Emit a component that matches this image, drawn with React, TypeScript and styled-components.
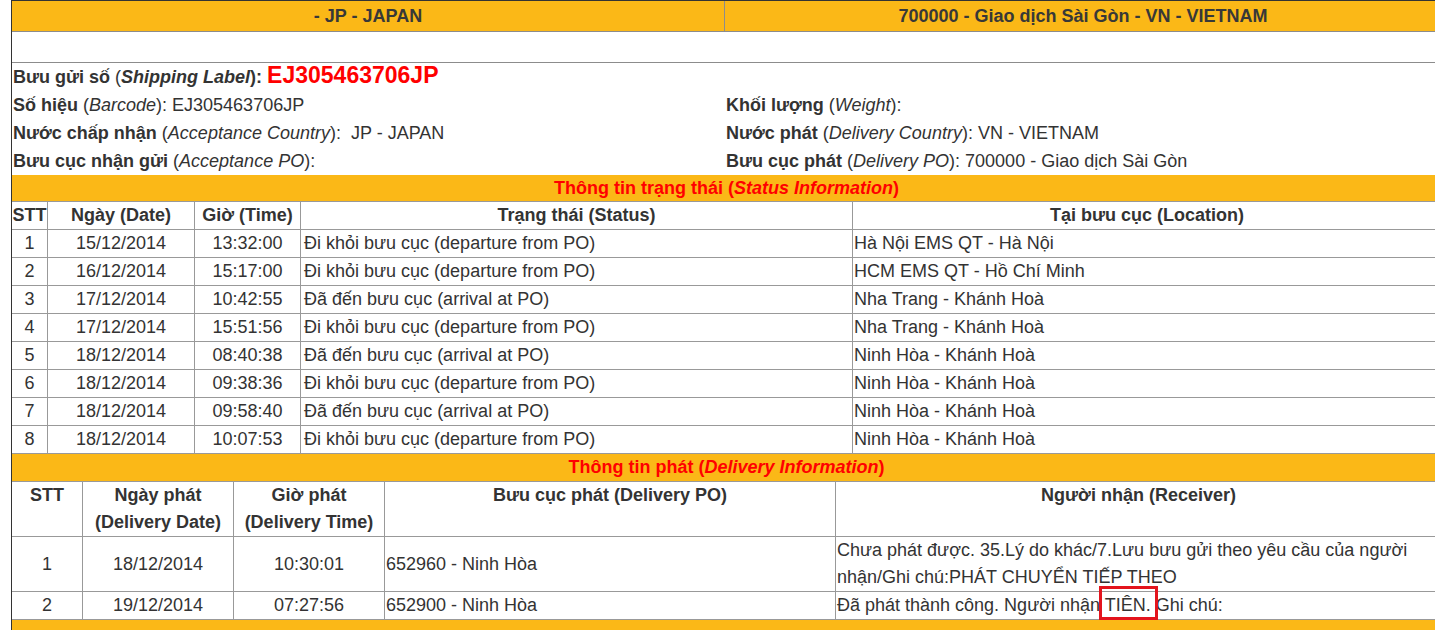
import React from "react";
import styled, { createGlobalStyle } from "styled-components";

const ORANGE = "#fbb817";
const LINE = "#8c8c8c";

const GlobalStyle = createGlobalStyle`
  html, body {
    margin: 0;
    padding: 0;
    background: #fff;
    overflow: hidden;
  }
  body {
    font-family: "Liberation Sans", Arial, sans-serif;
    font-size: 18px;
    color: #333;
  }
`;

const Page = styled.div`
  box-sizing: border-box;
  margin-left: 11px;
  width: 1430px;
  border-left: 1px solid #333;
  border-top: 1px solid #333;
`;

const TopHeader = styled.div`
  display: grid;
  grid-template-columns: 713px 1fr;
  background: ${ORANGE};
  border-bottom: 1px solid ${LINE};
  font-weight: bold;
  line-height: 30px;
  text-align: center;
  color: #383838;
`;

const HeaderCell = styled.div<{ $divider?: boolean }>`
  border-right: ${(p) => (p.$divider ? `1px solid ${LINE}` : "none")};
`;

const EmptyRow = styled.div`
  height: 30px;
  border-bottom: 1px solid ${LINE};
`;

const InfoGrid = styled.div`
  display: grid;
  grid-template-columns: 713px 1fr;
  grid-auto-rows: 28px;
  line-height: 28px;
`;

const InfoCell = styled.div`
  padding-left: 1px;
  white-space: nowrap;
`;

const LabelCode = styled.span`
  color: #f00;
  font-size: 23px;
  font-weight: bold;
  line-height: 20px;
`;

const Band = styled.div<{ $h?: number }>`
  background: ${ORANGE};
  color: #f00;
  font-weight: bold;
  text-align: center;
  line-height: ${(p) => p.$h ?? 26}px;
  border-bottom: 1px solid #999;
`;

const Row = styled.div<{ $cols: string }>`
  display: grid;
  grid-template-columns: ${(p) => p.$cols};
  border-bottom: 1px solid #999;
  line-height: 27px;
`;

const Cell = styled.div<{ $align?: "left" | "center"; $top?: boolean; $last?: boolean; $pad?: number }>`
  display: flex;
  flex-direction: column;
  justify-content: ${(p) => (p.$top ? "flex-start" : "center")};
  text-align: ${(p) => p.$align ?? "center"};
  padding: 0 ${(p) => p.$pad ?? 0}px;
  border-right: ${(p) => (p.$last ? "none" : "1px solid #999")};
  white-space: ${(p) => (p.$align === "left" ? "normal" : "nowrap")};
`;

const HeadCell = styled(Cell)`
  font-weight: bold;
`;

const Marked = styled.span`
  position: relative;
  &::after {
    content: "";
    position: absolute;
    left: -6px;
    right: -7px;
    top: -9px;
    bottom: -5px;
    border: 3px solid #e3141d;
  }
`;

const STATUS_COLS = "36px 147px 106px 552px 1fr";
const DELIVERY_COLS = "71px 151px 151px 451px 1fr";

const DEPART = "Đi khỏi bưu cục (departure from PO)";
const ARRIVE = "Đã đến bưu cục (arrival at PO)";
const NINH = "Ninh Hòa - Khánh Hoà";
const NHA = "Nha Trang - Khánh Hoà";

const statusRows = [
  ["1", "15/12/2014", "13:32:00", DEPART, "Hà Nội EMS QT - Hà Nội"],
  ["2", "16/12/2014", "15:17:00", DEPART, "HCM EMS QT - Hồ Chí Minh"],
  ["3", "17/12/2014", "10:42:55", ARRIVE, NHA],
  ["4", "17/12/2014", "15:51:56", DEPART, NHA],
  ["5", "18/12/2014", "08:40:38", ARRIVE, NINH],
  ["6", "18/12/2014", "09:38:36", DEPART, NINH],
  ["7", "18/12/2014", "09:58:40", ARRIVE, NINH],
  ["8", "18/12/2014", "10:07:53", DEPART, NINH],
];

export default function App() {
  return (
    <>
      <GlobalStyle />
      <Page>
        <TopHeader>
          <HeaderCell $divider>- JP - JAPAN</HeaderCell>
          <HeaderCell>700000 - Giao dịch Sài Gòn - VN - VIETNAM</HeaderCell>
        </TopHeader>
        <EmptyRow />

        <InfoGrid>
          <InfoCell>
            <b>Bưu gửi số</b> (<b><i>Shipping Label</i>): </b>
            <LabelCode>EJ305463706JP</LabelCode>
          </InfoCell>
          <InfoCell />
          <InfoCell>
            <b>Số hiệu</b> (<i>Barcode</i>): EJ305463706JP
          </InfoCell>
          <InfoCell>
            <b>Khối lượng</b> (<i>Weight</i>):
          </InfoCell>
          <InfoCell>
            <b>Nước chấp nhận</b> (<i>Acceptance Country</i>):&nbsp; JP - JAPAN
          </InfoCell>
          <InfoCell>
            <b>Nước phát</b> (<i>Delivery Country</i>): VN - VIETNAM
          </InfoCell>
          <InfoCell>
            <b>Bưu cục nhận gửi</b> (<i>Acceptance PO</i>):
          </InfoCell>
          <InfoCell>
            <b>Bưu cục phát</b> (<i>Delivery PO</i>): 700000 - Giao dịch Sài Gòn
          </InfoCell>
        </InfoGrid>

        <Band>
          Thông tin trạng thái (<i>Status Information</i>)
        </Band>
        <Row $cols={STATUS_COLS}>
          <HeadCell>STT</HeadCell>
          <HeadCell>Ngày (Date)</HeadCell>
          <HeadCell>Giờ (Time)</HeadCell>
          <HeadCell>Trạng thái (Status)</HeadCell>
          <HeadCell $last>Tại bưu cục (Location)</HeadCell>
        </Row>
        {statusRows.map((r) => (
          <Row key={r[0]} $cols={STATUS_COLS}>
            <Cell>{r[0]}</Cell>
            <Cell>{r[1]}</Cell>
            <Cell>{r[2]}</Cell>
            <Cell $align="left" $pad={3}>{r[3]}</Cell>
            <Cell $align="left" $pad={1} $last>{r[4]}</Cell>
          </Row>
        ))}

        <Band $h={27}>
          Thông tin phát (<i>Delivery Information</i>)
        </Band>
        <Row $cols={DELIVERY_COLS}>
          <HeadCell $top>STT</HeadCell>
          <HeadCell $top>
            Ngày phát
            <br />
            (Delivery Date)
          </HeadCell>
          <HeadCell $top>
            Giờ phát
            <br />
            (Delivery Time)
          </HeadCell>
          <HeadCell $top>Bưu cục phát (Delivery PO)</HeadCell>
          <HeadCell $top $last>Người nhận (Receiver)</HeadCell>
        </Row>
        <Row $cols={DELIVERY_COLS}>
          <Cell>1</Cell>
          <Cell>18/12/2014</Cell>
          <Cell>10:30:01</Cell>
          <Cell $align="left" $pad={1}>652960 - Ninh Hòa</Cell>
          <Cell $align="left" $pad={1} $last>
            Chưa phát được. 35.Lý do khác/7.Lưu bưu gửi theo yêu cầu của người nhận/Ghi chú:PHÁT CHUYỂN TIẾP THEO
          </Cell>
        </Row>
        <Row $cols={DELIVERY_COLS}>
          <Cell>2</Cell>
          <Cell>19/12/2014</Cell>
          <Cell>07:27:56</Cell>
          <Cell $align="left" $pad={1}>652900 - Ninh Hòa</Cell>
          <Cell $align="left" $pad={1} $last>
            <span>
              Đã phát thành công. Người nhận <Marked>TIÊN.</Marked> Ghi chú:
            </span>
          </Cell>
        </Row>
        <Band $h={26}>&nbsp;</Band>
      </Page>
    </>
  );
}
